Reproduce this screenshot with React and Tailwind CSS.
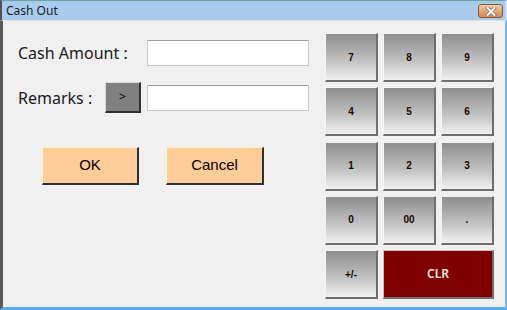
import React from "react";

const keyCls =
  "flex items-center justify-center h-full text-[10px] font-bold text-[#1a0a00] bg-[linear-gradient(to_bottom,#8e8e8e_0%,#a8a8a8_30%,#c4c4c4_60%,#e0e0e0_85%,#f0f0f0_100%)] border-t border-l border-t-[#f4f4f4] border-l-[#f4f4f4] border-r-2 border-b-2 border-r-[#6e6e6e] border-b-[#6e6e6e]";

function Key({ label }) {
  return (
    <div className={keyCls} style={{ fontFamily: '"Liberation Sans", Arial, sans-serif' }}>
      {label}
    </div>
  );
}

export default function App() {
  return (
    <div
      className="w-[507px] h-[310px] flex flex-col bg-[#f0f0f0] overflow-hidden"
      style={{ fontFamily: '"Noto Sans", "Open Sans", sans-serif' }}
    >
      {/* Title bar */}
      <div className="h-[20px] flex items-center justify-between bg-[linear-gradient(to_bottom,#9ad0d8_0%,#a9cbee_12%,#a9cbee_100%)] border-l-2 border-l-[#505050] border-t border-t-[#7a9ab0] pl-[4px] pr-[2px] border-r-2 border-r-[#c8e0f4]">
        <span className="text-[12px] leading-none text-[#1a1a1a] mt-[1px]">Cash Out</span>
        <div className="w-[25px] h-[14px] mt-[1px] rounded-[3px] border border-[#8a5a3a] bg-[linear-gradient(to_bottom,#f2cfa8_0%,#e2a676_50%,#d48c58_100%)] flex items-center justify-center">
          <svg width="12" height="9" viewBox="0 0 12 9">
            <path d="M2.5 1 L9.5 8 M9.5 1 L2.5 8" stroke="#7a6a60" strokeWidth="3.4" strokeLinecap="square" />
            <path d="M2.5 1 L9.5 8 M9.5 1 L2.5 8" stroke="#ffffff" strokeWidth="2" strokeLinecap="square" />
          </svg>
        </div>
      </div>

      {/* Body */}
      <div className="flex-1 flex border-l-[3px] border-l-[#5a5a5a] border-r-[2px] border-r-[#7ab8ea] border-b-[3px] border-b-[#5ab0ee] border-t border-t-[#e0e0e0]">
        {/* Left panel */}
        <div className="w-[322px] pl-[15px] pt-[19px] flex flex-col">
          <div className="flex items-center h-[26px]">
            <span className="w-[129px] text-[16px] text-[#1a1a1a]">Cash Amount :</span>
            <div className="w-[162px] h-[26px] bg-white border border-[#c4c8cc] border-t-[#9aa0a6]" />
          </div>
          <div className="flex items-center h-[31px] mt-[16px]">
            <span className="w-[87px] text-[16px] text-[#1a1a1a]">Remarks :</span>
            <div className="w-[36px] h-[31px] mr-[6px] bg-[#808080] border border-t-[#d8d8d8] border-l-[#d8d8d8] border-r-2 border-b-2 border-r-[#303030] border-b-[#303030] flex items-center justify-center text-[12px] text-black">
              &gt;
            </div>
            <div className="w-[162px] h-[26px] bg-white border border-[#c4c8cc] border-t-[#9aa0a6]" />
          </div>
          <div className="flex gap-[27px] mt-[34px] pl-[24px]" style={{ fontFamily: '"Liberation Sans", Arial, sans-serif' }}>
            <div className="w-[97px] h-[38px] bg-[#ffcc99] border border-t-[#fff4c8] border-l-[#fff4c8] border-r-2 border-b-2 border-r-[#303030] border-b-[#303030] flex items-center justify-center text-[15px] text-black">
              OK
            </div>
            <div className="w-[98px] h-[38px] bg-[#ffcc99] border border-t-[#fff4c8] border-l-[#fff4c8] border-r-2 border-b-2 border-r-[#303030] border-b-[#303030] flex items-center justify-center text-[15px] text-black">
              Cancel
            </div>
          </div>
        </div>

        {/* Keypad */}
        <div className="pt-[12px] grid grid-cols-[53px_53px_53px] grid-rows-[49px_49px_49px_49px_49px] gap-x-[5px] gap-y-[5.25px] h-fit">
          <Key label="7" />
          <Key label="8" />
          <Key label="9" />
          <Key label="4" />
          <Key label="5" />
          <Key label="6" />
          <Key label="1" />
          <Key label="2" />
          <Key label="3" />
          <Key label="0" />
          <Key label="00" />
          <Key label="." />
          <Key label="+/-" />
          <div
            className="col-span-2 flex items-center justify-center text-[12px] font-semibold text-[#f4ece4] bg-[#800000] border-t border-l border-t-[#c0c0c0] border-l-[#c0c0c0] border-r-2 border-b-2 border-r-[#707070] border-b-[#707070]"
            style={{ fontFamily: '"Noto Sans", "Open Sans", sans-serif' }}
          >
            CLR
          </div>
        </div>
      </div>
    </div>
  );
}
